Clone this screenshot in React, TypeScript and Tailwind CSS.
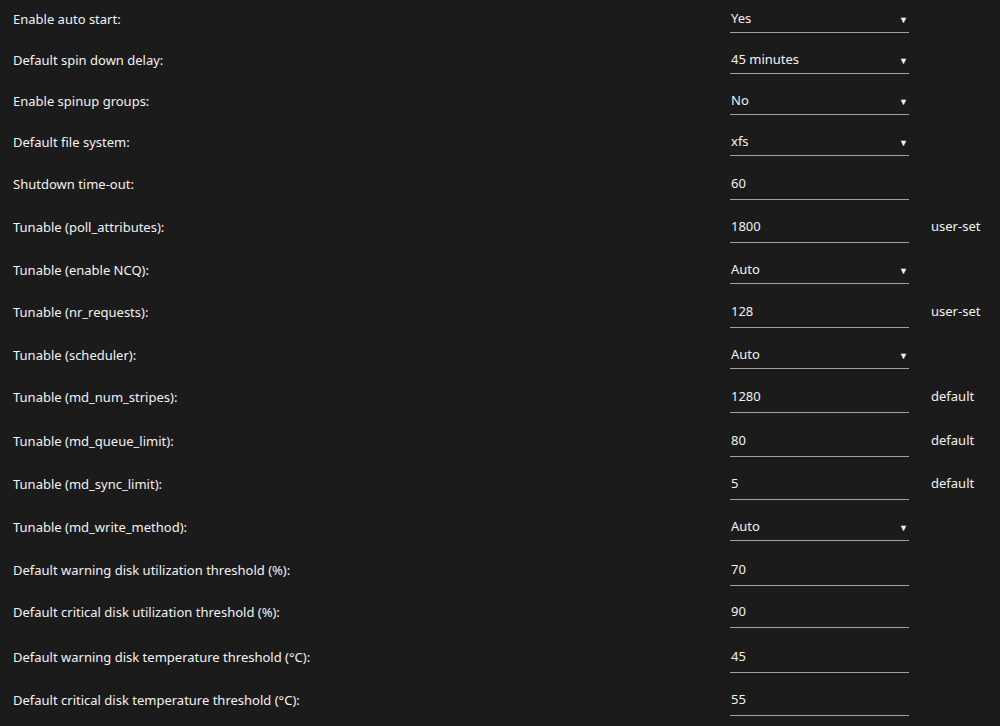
const rows: { label: string; value: string; select?: boolean; note?: string; gap: string }[] = [
    { label: "Enable auto start:", value: "Yes", select: true, gap: "mt-0" },
    { label: "Default spin down delay:", value: "45 minutes", select: true, gap: "mt-[3px]" },
    { label: "Enable spinup groups:", value: "No", select: true, gap: "mt-[3px]" },
    { label: "Default file system:", value: "xfs", select: true, gap: "mt-[3px]" },
    { label: "Shutdown time-out:", value: "60", gap: "mt-[4px]" },
    { label: "Tunable (poll_attributes):", value: "1800", note: "user-set", gap: "mt-[5px]" },
    { label: "Tunable (enable NCQ):", value: "Auto", select: true, gap: "mt-[5px]" },
    { label: "Tunable (nr_requests):", value: "128", note: "user-set", gap: "mt-[4px]" },
    { label: "Tunable (scheduler):", value: "Auto", select: true, gap: "mt-[5px]" },
    { label: "Tunable (md_num_stripes):", value: "1280", note: "default", gap: "mt-[4px]" },
    { label: "Tunable (md_queue_limit):", value: "80", note: "default", gap: "mt-[6px]" },
    { label: "Tunable (md_sync_limit):", value: "5", note: "default", gap: "mt-[5px]" },
    { label: "Tunable (md_write_method):", value: "Auto", select: true, gap: "mt-[5px]" },
    { label: "Default warning disk utilization threshold (%):", value: "70", gap: "mt-[5px]" },
    { label: "Default critical disk utilization threshold (%):", value: "90", gap: "mt-[4px]" },
    { label: "Default warning disk temperature threshold (°C):", value: "45", gap: "mt-[7px]" },
    { label: "Default critical disk temperature threshold (°C):", value: "55", gap: "mt-[5px]" },
]

export default function App() {
    return (
        <div className="w-[1000px] h-[726px] overflow-hidden bg-[#1c1b1b] text-[#f2f2f2] text-[13px] font-['Noto_Sans',sans-serif]">
            {rows.map((r, i) => (
                <div key={i} className={`${r.gap} flex items-center h-[38px]`}>
                    <div className="w-[730px] pl-[13px] leading-[20px]">{r.label}</div>
                    {r.select ? (
                        <div className="w-[179px] h-[27px] pt-[1px] flex items-center justify-between border-b border-[#a3a3a3] pl-[1px]">
                            <span>{r.value}</span>
                            <span className="text-[9px] leading-none mr-[1px]">▼</span>
                        </div>
                    ) : (
                        <div className="w-[179px] h-[31px] pt-[1px] flex items-center border-b border-[#a3a3a3] pl-[1px]">
                            <span>{r.value}</span>
                        </div>
                    )}
                    {r.note && <div className="ml-[22px]">{r.note}</div>}
                </div>
            ))}
        </div>
    )
}
